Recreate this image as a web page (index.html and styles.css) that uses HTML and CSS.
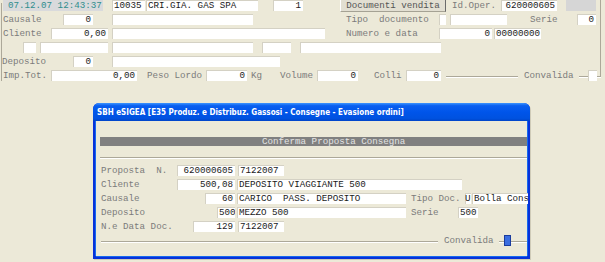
FILE: index.html
```html
<!DOCTYPE html>
<html lang="it">
<head>
    <meta charset="UTF-8">
    <title>Evasione ordini</title>
    <link rel="stylesheet" href="styles.css">
</head>
<body>
    <div class="form">
        <div class="row">
            <span class="fld date ml3 w100">07.12.07 12:43:37</span>
            <span class="fld ml9 w33">10035</span>
            <span class="fld ml1 w112">CRI.GIA. GAS SPA</span>
            <span class="fld num ml15 w30">1</span>
            <span class="btn ml37 w106">Documenti vendita</span>
            <span class="lbl ml6 w49">Id.Oper.</span>
            <span class="fld num w56">620000605</span>
            <span class="fld off ml9 w30"></span>
        </div>
        <div class="row">
            <span class="lbl ml3 w60">Causale</span>
            <span class="fld num w30">0</span>
            <span class="fld ml19 w141"></span>
            <span class="lbl ml93 w93">Tipo  documento</span>
            <span class="fld w7"></span>
            <span class="fld ml4 w57"></span>
            <span class="lbl ml23 w47">Serie</span>
            <span class="fld num w19">0</span>
        </div>
        <div class="row">
            <span class="lbl ml3 w48">Cliente</span>
            <span class="fld num w57">0,00</span>
            <span class="fld ml4 w213"></span>
            <span class="lbl ml21 w93">Numero e data</span>
            <span class="fld num w53">0</span>
            <span class="fld ml2 w47">00000000</span>
        </div>
        <div class="row">
            <span class="fld ml23 w13"></span>
            <span class="fld ml4 w68"></span>
            <span class="fld ml4 w141"></span>
            <span class="fld ml9 w29"></span>
            <span class="fld ml9 w141"></span>
        </div>
        <div class="row">
            <span class="lbl ml2 w71">Deposito</span>
            <span class="fld num w20">0</span>
            <span class="fld ml19 w168"></span>
        </div>
        <div class="row">
            <span class="lbl ml3 w48">Imp.Tot.</span>
            <span class="fld num w86">0,00</span>
            <span class="lbl ml10 w59">Peso Lordo</span>
            <span class="fld num w41">0</span>
            <span class="lbl ml4 w29">Kg</span>
            <span class="lbl w37">Volume</span>
            <span class="fld num w41">0</span>
            <span class="lbl ml16 w32">Colli</span>
            <span class="fld num w35">0</span>
            <span class="rule ml5 w72"></span>
            <span class="lbl ml6 w55">Convalida</span>
            <span class="rule w9"></span>
            <span class="fld w9"></span>
            <span class="rule w4"></span>
        </div>
    </div>

    <div class="dialog">
        <div class="title">SBH eSIGEA [E35 Produz. e Distribuz. Gassosi - Consegne - Evasione ordini]</div>
        <div class="client">
            <div class="banner">Conferma Proposta Consegna</div>
            <div class="etched"></div>
            <div class="rows">
                <div class="row">
                    <span class="lbl ml5 w76">Proposta  N.</span>
                    <span class="fld num w58">620000605</span>
                    <span class="fld ml3 w46">7122007</span>
                </div>
                <div class="row">
                    <span class="lbl ml5 w76">Cliente</span>
                    <span class="fld num w58">500,08</span>
                    <span class="fld ml2 w225">DEPOSITO VIAGGIANTE 500</span>
                </div>
                <div class="row">
                    <span class="lbl ml5 w104">Causale</span>
                    <span class="fld num w30">60</span>
                    <span class="fld ml2 w169">CARICO  PASS. DEPOSITO</span>
                    <span class="lbl ml5 w54">Tipo Doc.</span>
                    <span class="fld tight w6">U</span>
                    <span class="fld ml1 w56">Bolla Cons</span>
                </div>
                <div class="row">
                    <span class="lbl ml5 w116">Deposito</span>
                    <span class="fld num w18">500</span>
                    <span class="fld ml2 w169">MEZZO 500</span>
                    <span class="lbl ml5 w47">Serie</span>
                    <span class="fld w20">500</span>
                </div>
                <div class="row">
                    <span class="lbl ml5 w92">N.e Data Doc.</span>
                    <span class="fld num w42">129</span>
                    <span class="fld ml3 w46">7122007</span>
                </div>
                <div class="row last">
                    <span class="rule ml5 w337"></span>
                    <span class="lbl ml6 w55">Convalida</span>
                    <span class="rule w5"></span>
                    <span class="check"></span>
                    <span class="rule w16"></span>
                </div>
            </div>
        </div>
    </div>
</body>
</html>
```

FILE: styles.css
```css
* {
    margin: 0;
    padding: 0;
    box-sizing: border-box;
}

body {
    width: 605px;
    height: 262px;
    overflow: hidden;
    background-color: #ece9d8;
    font-family: "Liberation Mono", "DejaVu Sans Mono", monospace;
    font-size: 9.2px;
    color: #1a1a1a;
    position: relative;
}

/* main form */
.form {
    position: relative;
    width: 605px;
}

.form::before {
    content: '';
    position: absolute;
    left: 1px;
    top: 3px;
    height: 78px;
    border-left: 1px solid #aca899;
}

.form::after {
    content: '';
    position: absolute;
    left: 600px;
    top: 0;
    height: 77px;
    border-left: 1px solid #aca899;
}

.row {
    display: flex;
    align-items: flex-start;
    height: 14px;
    white-space: pre;
}

.lbl {
    height: 11px;
    line-height: 11px;
    color: #7b7b7b;
    flex-shrink: 0;
}

.fld {
    height: 11px;
    line-height: 11px;
    padding: 0 2px;
    background-color: #fff;
    box-shadow: inset 1px 1px 0 #d4d1c4;
    overflow: hidden;
    flex-shrink: 0;
}

.fld.num {
    text-align: right;
}

.fld.tight {
    padding: 0;
    overflow: visible;
}

.fld.date {
    background-color: #d9dadc;
    box-shadow: none;
    color: #2f8d8d;
    padding-left: 5px;
}

.fld.off {
    background-color: #d6d6d6;
    box-shadow: none;
}

.btn {
    height: 12px;
    line-height: 11px;
    text-align: center;
    color: #555;
    background-color: #e2dfd2;
    border-left: 1px solid #fff;
    border-right: 1px solid #6b6b6b;
    border-bottom: 1px solid #a5a294;
    flex-shrink: 0;
}

.rule {
    height: 1px;
    margin-top: 6px;
    background-color: #aca899;
    box-shadow: 0 1px 0 #fff;
    flex-shrink: 0;
}

/* dialog window */
.dialog {
    position: absolute;
    left: 93px;
    top: 103px;
    width: 437px;
    height: 156px;
    display: flex;
    flex-direction: column;
    border-radius: 6px 6px 0 0;
    background-color: #0831d9;
    box-shadow: 1px 1px 0 #cfcbb8;
}

.title {
    height: 18px;
    line-height: 19px;
    padding-left: 4px;
    color: #fff;
    font-family: "DejaVu Sans Condensed", "DejaVu Sans", sans-serif;
    font-weight: bold;
    font-size: 8px;
    white-space: nowrap;
    overflow: hidden;
    border-radius: 6px 6px 0 0;
    background: linear-gradient(#3d95ff 0%, #0a5ff0 15%, #0055ea 50%, #0052e0 85%, #0044c8 100%);
}

.client {
    flex: 1;
    margin: 0 3px 3px;
    background-color: #ece9d8;
    padding: 16px 0 0 4px;
    box-shadow: -1px 0 0 #166aee, 1px 0 0 #166aee, 0 1px 0 #166aee;
}

.banner {
    height: 9px;
    line-height: 9px;
    padding-left: 162px;
    background-color: #808080;
    color: #e4e4e4;
    white-space: pre;
}

.etched {
    margin-top: 11px;
    height: 1px;
    background-color: #aca899;
    box-shadow: 0 1px 0 #fff;
}

.rows {
    margin-top: 7px;
    margin-left: -4px;
}

.row.last {
    height: 12px;
    margin-top: 0;
}

.check {
    width: 7px;
    height: 11px;
    background-color: #3b6ee0;
    border: 1px solid #1b3c9e;
    flex-shrink: 0;
}

.ml1 { margin-left: 1px; }
.ml2 { margin-left: 2px; }
.ml3 { margin-left: 3px; }
.ml4 { margin-left: 4px; }
.ml5 { margin-left: 5px; }
.ml6 { margin-left: 6px; }
.ml9 { margin-left: 9px; }
.ml10 { margin-left: 10px; }
.ml15 { margin-left: 15px; }
.ml16 { margin-left: 16px; }
.ml19 { margin-left: 19px; }
.ml21 { margin-left: 21px; }
.ml23 { margin-left: 23px; }
.ml37 { margin-left: 37px; }
.ml93 { margin-left: 93px; }

.w4 { width: 4px; }
.w5 { width: 5px; }
.w6 { width: 6px; }
.w7 { width: 7px; }
.w9 { width: 9px; }
.w13 { width: 13px; }
.w16 { width: 16px; }
.w18 { width: 18px; }
.w19 { width: 19px; }
.w20 { width: 20px; }
.w29 { width: 29px; }
.w30 { width: 30px; }
.w32 { width: 32px; }
.w33 { width: 33px; }
.w35 { width: 35px; }
.w37 { width: 37px; }
.w41 { width: 41px; }
.w42 { width: 42px; }
.w46 { width: 46px; }
.w47 { width: 47px; }
.w48 { width: 48px; }
.w49 { width: 49px; }
.w53 { width: 53px; }
.w54 { width: 54px; }
.w55 { width: 55px; }
.w56 { width: 56px; }
.w57 { width: 57px; }
.w58 { width: 58px; }
.w59 { width: 59px; }
.w60 { width: 60px; }
.w68 { width: 68px; }
.w71 { width: 71px; }
.w72 { width: 72px; }
.w76 { width: 76px; }
.w86 { width: 86px; }
.w92 { width: 92px; }
.w93 { width: 93px; }
.w100 { width: 100px; }
.w104 { width: 104px; }
.w106 { width: 106px; }
.w112 { width: 112px; }
.w116 { width: 116px; }
.w141 { width: 141px; }
.w168 { width: 168px; }
.w169 { width: 169px; }
.w213 { width: 213px; }
.w225 { width: 225px; }
.w337 { width: 337px; }
```
